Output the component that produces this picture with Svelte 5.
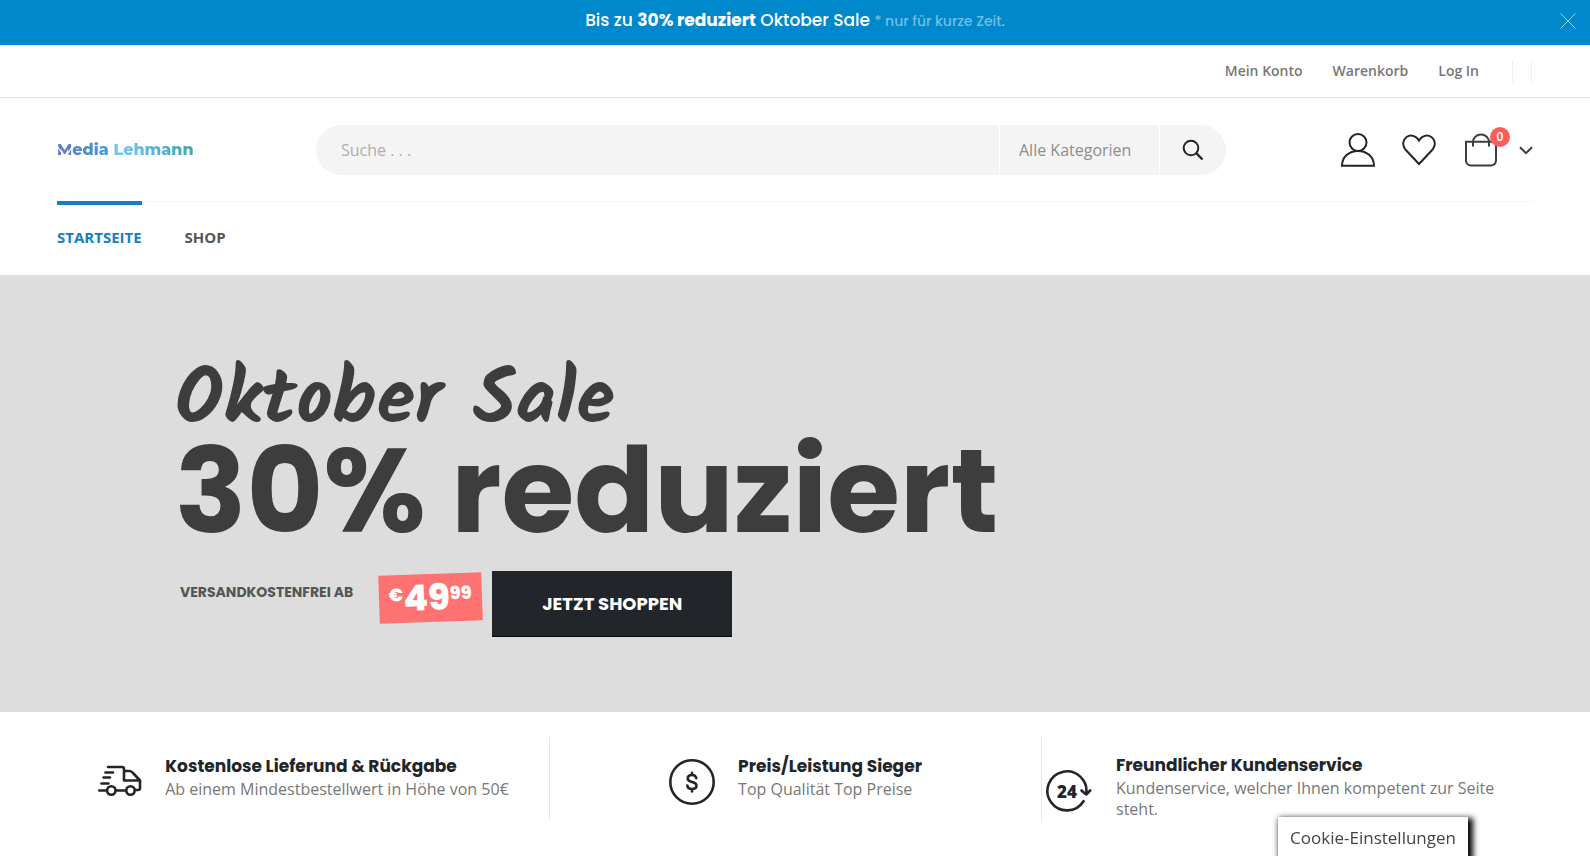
<script>
  const links = ['Mein Konto', 'Warenkorb', 'Log In'];
  let open = $state(true);
  let query = $state('');
</script>

{#if open}
  <div class="promo">
    <p>Bis zu <b>30% reduziert</b> Oktober Sale <small>* nur für kurze Zeit.</small></p>
    <button class="close" aria-label="Schließen" onclick={() => (open = false)}>
      <svg width="16" height="16" viewBox="0 0 16 16"><path d="M.5.5l15 15M15.500.5l-15 15" /></svg>
    </button>
  </div>
{/if}

<header>
  <div class="top">
    <nav class="top-links">
      {#each links as link}<a href="#top">{link}</a>{/each}
    </nav>
    <span class="sep"></span>
    <span class="sep"></span>
  </div>

  <div class="main">
    <div class="brand">
      <a class="logo" href="#home">Media Lehmann</a>
      <svg class="cuts" width="16" height="24" viewBox="0 0 16 24"><path d="M0 8l7.500 10.500M15 9l-5 8" /></svg>
    </div>
    <form class="search" onsubmit={(e) => e.preventDefault()}>
      <input type="search" aria-label="Suche" placeholder="Suche . . ." bind:value={query} />
      <select aria-label="Kategorie"><option>Alle Kategorien</option></select>
      <button aria-label="Suchen">
        <svg width="22" height="22" viewBox="0 0 22 22"><circle cx="9" cy="9" r="7.300" /><path d="M14.200 14.200L20.500 20.500" stroke-width="2.400" /></svg>
      </button>
    </form>
    <div class="actions">
      <a href="#account" aria-label="Mein Konto">
        <svg width="34" height="34" viewBox="0 0 34 34"><circle cx="17" cy="9.500" r="8.500" /><path d="M1 32.800C1 24 8 18 17 18s16 6 16 14.800z" /></svg>
      </a>
      <a href="#wishlist" aria-label="Wunschliste">
        <svg width="34" height="34" viewBox="0 0 34 34"><path d="M17 31L3.600 16.800C-.5 12 1.200 6.500 4.600 4 8.500 1.300 14 2.500 17 7.500 20 2.500 25.500 1.300 29.400 4c3.400 2.500 5.100 8 1 12.800z" /></svg>
      </a>
      <a class="cart" href="#cart" aria-label="Warenkorb">
        <svg width="32" height="34" viewBox="0 0 32 34"><path d="M1 8.800h30v18.700a5 5 0 0 1-5 5H6a5 5 0 0 1-5-5zM8 13.500V9a8 7.500 0 0 1 16 0v4.500" /></svg>
        <span class="badge">0</span>
        <svg class="chevron" width="14" height="9" viewBox="0 0 14 9"><path d="M1 1.200l6 6 6-6" /></svg>
      </a>
    </div>
  </div>

  <nav class="menu">
    <a class="active" href="#home">STARTSEITE</a>
    <a href="#shop">SHOP</a>
  </nav>
</header>

<section class="hero">
  <p class="script">Oktober Sale</p>
  <h1>30% reduziert</h1>
  <div class="offer">
    <span class="from">VERSANDKOSTENFREI AB</span>
    <span class="price"><sup>€</sup>49<sup>99</sup></span>
    <a class="shop" href="#shop">JETZT SHOPPEN</a>
  </div>
</section>

<section class="features">
  <article>
    <svg class="van" width="44" height="31" viewBox="0 0 44 31"><path d="M10 2h14a2 2 0 0 1 2 2v11.500h16v7.500a2 2 0 0 1-2 2h-3M26 6h5.500q2 0 3.500 2l7 7.500M1.200 25.500H8M18.500 25.500H27M7.500 7.500H15M5.500 12.500H12M3.500 18.500h7" /><circle cx="13.300" cy="25.500" r="4.200" /><circle cx="32.500" cy="25.500" r="4.200" /></svg>
    <div>
      <h2>Kostenlose Lieferund &amp; Rückgabe</h2>
      <p>Ab einem Mindestbestellwert in Höhe von 50€</p>
    </div>
  </article>
  <article>
    <svg width="46" height="46" viewBox="0 0 46 46"><circle cx="23" cy="23" r="21.700" /><path d="M27.300 19.200c-.4-2-1.900-3.200-4.300-3.200-2.600 0-4.300 1.400-4.300 3.500 0 4.800 8.800 2.200 8.800 7 0 2.300-1.900 3.500-4.500 3.500s-4.400-1.300-4.700-3.500M23 13.800V16M23 30v2.500" /></svg>
    <div>
      <h2>Preis/Leistung Sieger</h2>
      <p>Top Qualität Top Preise</p>
    </div>
  </article>
  <article class="service">
    <svg width="46" height="43" viewBox="0 0 46 43"><path d="M37.500 31.200A19.500 19.500 0 1 1 40.200 24M35.500 20.500l4.700 4 4-4" /><text x="21" y="27.500" text-anchor="middle">24</text></svg>
    <div>
      <h2>Freundlicher Kundenservice</h2>
      <p>Kundenservice, welcher Ihnen kompetent zur Seite steht.</p>
    </div>
  </article>
</section>

<button class="cookies">Cookie-Einstellungen</button>

<style>
  :global(body) {
    margin: 0;
    background: #fff;
    color: #777;
    font: 14px/20px 'Open Sans', sans-serif;
    overflow: hidden;
  }
  a { color: inherit; text-decoration: none; }
  p, h1, h2 { margin: 0; }
  button { border: 0; padding: 0; background: none; cursor: pointer; }
  svg { display: block; fill: none; stroke: #222529; stroke-width: 2; }

  .promo {
    display: flex;
    align-items: center;
    justify-content: center;
    position: relative;
    height: 45px;
    padding-bottom: 4px;
    box-sizing: border-box;
    background: #0088cc;
    color: #fff;
    font: 500 17px/24px Poppins, Inter, sans-serif;
  }
  .promo b { font-weight: 700; }
  .promo small { font-size: 14px; color: #70bee4; }
  .close { position: absolute; right: 14px; top: 13px; }
  .close svg { stroke: #9bd2ec; stroke-width: 1; }

  .top {
    display: flex;
    justify-content: flex-end;
    align-items: center;
    height: 52px;
    padding: 0 58px;
    border-bottom: 1px solid #e7e7e7;
  }
  .top-links { display: flex; gap: 30px; margin-right: 33px; font-weight: 600; }
  .sep { width: 1px; height: 22px; margin-right: 18px; background: #eee; }
  .sep:last-child { margin-right: 0; }

  .main {
    display: flex;
    align-items: center;
    margin: 0 57px;
    padding: 27px 0 26px;
    border-bottom: 1px solid #f4f4f4;
  }
  .brand { flex: 0 0 259px; position: relative; }
  .logo {
    font: 800 16px/24px Montserrat, Inter, sans-serif;
    color: transparent;
    background: linear-gradient(90deg, #6878bd 0, #4792cf 38px, #39a5df 54px, #79c8f1 60px, #58b7d8 95px, #3ba5ae 138px);
    background-clip: text;
  }
  .cuts { position: absolute; left: 0; top: 0; stroke: #fff; stroke-width: 1.200; }
  .search {
    display: flex;
    flex: 1;
    height: 50px;
    border-radius: 25px;
    overflow: hidden;
    background: #f4f4f4;
  }
  .search input, .search select {
    appearance: none;
    border: 0;
    outline: 0;
    background: none;
    color: #8d8d8d;
    font: 16px/24px 'Open Sans', sans-serif;
  }
  .search input { flex: 1; min-width: 0; padding: 0 25px; }
  .search input::placeholder { color: #adadad; }
  .search select { width: 160px; padding: 0 19px; border-left: 1px solid #fff; }
  .search button {
    display: grid;
    place-items: center;
    width: 67px;
    border-left: 1px solid #fff;
  }
  .actions { display: flex; justify-content: flex-end; align-items: center; gap: 27px; flex: 0 0 307px; }
  .cart { display: flex; align-items: center; gap: 22px; position: relative; margin-left: 2px; }
  .cart svg { stroke: #3a3d41; }
  .badge {
    position: absolute;
    left: 25px;
    top: -6px;
    width: 20px;
    height: 20px;
    border-radius: 50%;
    background: #ff5b5b;
    color: #fff;
    font-weight: 600;
    font-size: 12px;
    text-align: center;
  }

  .menu {
    display: flex;
    gap: 43px;
    margin: -1px 57px 0;
    height: 74px;
    color: #555;
    font-size: 15px;
    font-weight: 700;
  }
  .menu a { border-top: 4px solid transparent; padding-top: 22px; }
  .menu .active { color: #1580bb; border-color: #1580bb; }

  .hero {
    padding: 98px 57px 75px 175px;
    background: #ddd;
    color: #3d3d3d;
  }
  .script {
    font: 700 78px/58px 'Segoe Script', Kalam, Caveat, cursive;
  }
  .hero h1 { font: 700 118px/120px Poppins, Inter, sans-serif; white-space: nowrap; }
  .offer {
    display: flex;
    align-items: flex-start;
    margin: 20px 0 0 5px;
    font: 700 16px/24px Poppins, Inter, sans-serif;
  }
  .from { padding-top: 9px; font-size: 14px; color: #555; }
  .price {
    margin: 3px 10px 0 26px;
    padding: 0 10px;
    background: #ff7272;
    color: #fff;
    font-size: 36px;
    font-weight: 800;
    line-height: 48px;
    transform: rotate(-2deg);
  }
  .price sup { font-size: 18px; line-height: 0; vertical-align: 10px; }
  .shop {
    padding: 21px 50px 20px;
    background: #222529;
    border-bottom: 1px solid #090a0b;
    color: #fff;
    font-size: 18px;
  }

  .features {
    display: grid;
    grid-template-columns: repeat(3, 1fr);
    margin: 25px 56px 25px 58px;
  }
  article {
    display: flex;
    align-items: center;
    justify-content: center;
    gap: 23px;
    height: 84px;
    border-right: 1px solid #e7e7e7;
  }
  article:last-child { border: 0; }
  article svg { flex: none; margin-top: 6px; stroke-width: 2.600; stroke-linecap: round; stroke-linejoin: round; }
  article .van { margin-top: 2px; }
  article text { font: 800 17px 'Open Sans', sans-serif; fill: #222529; stroke: none; }
  article h2 { font: 700 17px/25px Poppins, Inter, sans-serif; color: #222529; }
  article p { font-size: 16px; line-height: 21px; }
  article div { padding-bottom: 4px; }
  .service { justify-content: flex-start; gap: 24px; padding-left: 4px; }
  .service svg { margin-top: 24px; }
  .service div { padding: 14px 24px 0 0; }

  .cookies {
    position: fixed;
    right: 122px;
    bottom: 0;
    padding: 11px 12px 8px;
    background: #fff;
    box-shadow: 3px 3px 6px 2px #000;
    color: #444;
    font: 17px/20px 'Open Sans', sans-serif;
  }
</style>
